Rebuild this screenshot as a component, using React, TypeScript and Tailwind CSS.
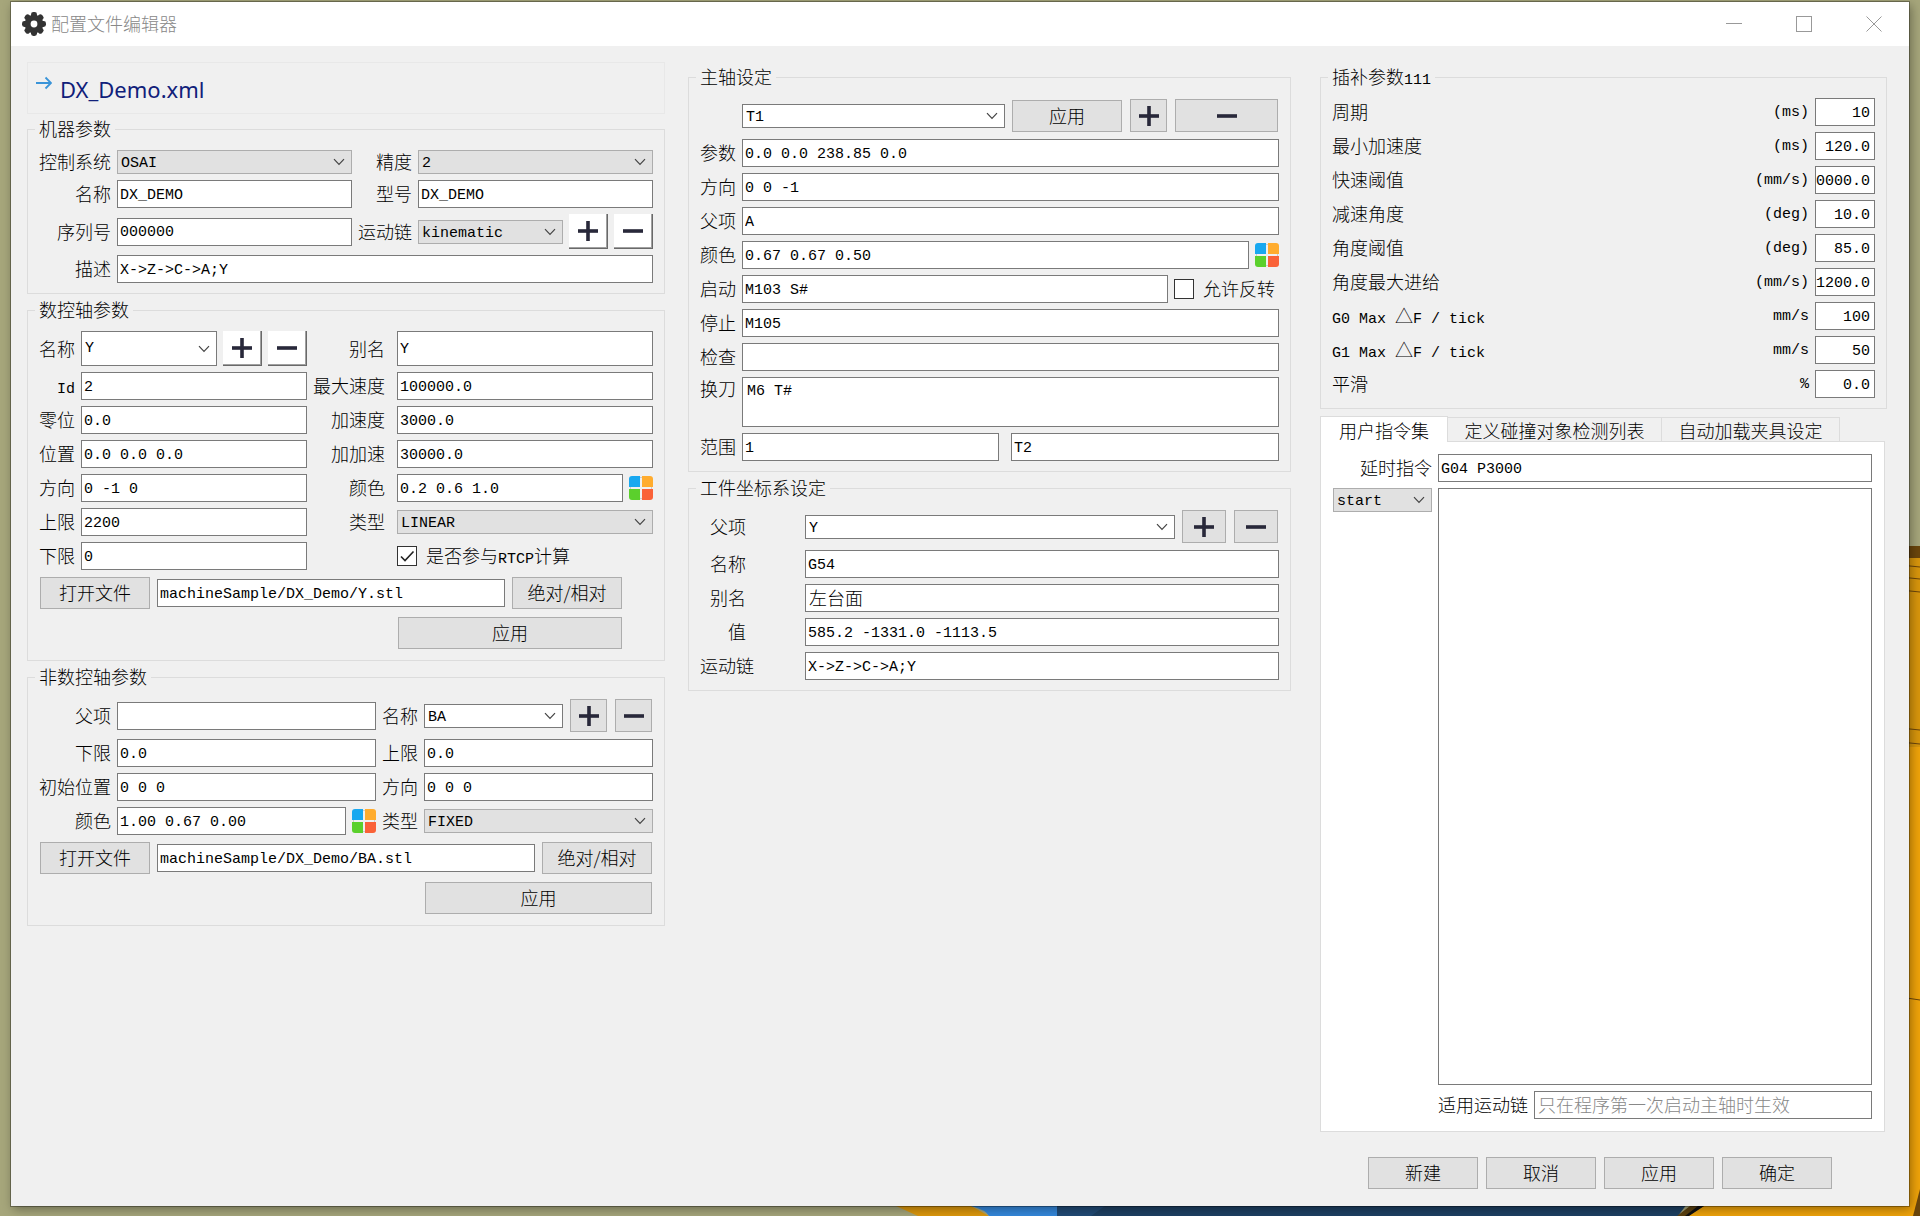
import React, { useState } from 'react';

const INPUT = "block h-7 w-full min-w-0 border border-[#7a7a7a] bg-white pt-[2px] pl-[2px] font-['Liberation_Mono','Noto_Sans_CJK_SC',monospace] text-[15px] font-normal text-black outline-none";
const INPUT_CJK = 'block h-7 w-full min-w-0 border border-[#7a7a7a] bg-white pb-[2px] pl-[3px] text-lg outline-none placeholder:text-[#888]';

interface FieldProps {
  id: string;
  label: string;
  value?: string;
  className?: string;
}

const Label: React.FC<{ id: string; className?: string; children: React.ReactNode }> = ({ id, className = '', children }) => (
  <label htmlFor={id} className={`h-6 whitespace-nowrap text-right leading-[22px] ${className}`}>{children}</label>
);

const Mono: React.FC<{ children: React.ReactNode }> = ({ children }) => (
  <span className="font-['Liberation_Mono',monospace] text-[15px] font-normal leading-none">{children}</span>
);

const TextInput: React.FC<{ id: string; value?: string; className?: string; label?: string }> = ({ id, value = '', className = '', label }) => (
  <input id={id} type="text" defaultValue={value} aria-label={label} className={`${INPUT} ${className}`} />
);

const Field: React.FC<FieldProps> = ({ id, label, value, className }) => (
  <>
    <Label id={id} className={className}>{label}</Label>
    <TextInput id={id} value={value} />
  </>
);

interface ComboProps {
  id: string;
  value: string;
  editable?: boolean;
  className?: string;
  height?: string;
  label?: string;
}

const Combo: React.FC<ComboProps> = ({ id, value, editable = false, className = '', height = 'h-6', label }) => (
  <div className={`relative min-w-0 ${className}`}>
    <select
      id={id}
      aria-label={label}
      className={`block w-full appearance-none border pt-px pl-[3px] pr-6 font-['Liberation_Mono',monospace] text-[15px] font-normal text-black outline-none ${height} ${
        editable ? 'border-[#7a7a7a] bg-white' : 'border-[#adadad] bg-[#e1e1e1]'
      }`}
    >
      <option>{value}</option>
    </select>
    <svg className="absolute right-[7px] top-1/2 h-3 w-3 -translate-y-1/2 pointer-events-none" viewBox="0 0 12 12" fill="none" stroke="#444" strokeWidth="1.2">
      <path d="M1 3.2 6 8.4 11 3.2" />
    </svg>
  </div>
);

const PushButton: React.FC<{ className?: string; children: React.ReactNode }> = ({ className = 'w-[110px]', children }) => (
  <button type="button" className={`m-px h-8 shrink-0 border border-[#adadad] bg-[#e1e1e1] pb-[2px] text-center leading-[28px] ${className}`}>
    {children}
  </button>
);

const SignIcon: React.FC<{ sign: 'plus' | 'minus' }> = ({ sign }) => (
  <svg className="w-5 h-5 mx-auto" viewBox="0 0 20 20" fill="#28283a">
    <rect x="0" y="8.200" width="20" height="3.6" />
    {sign === 'plus' && <rect x="8.200" y="0" width="3.6" height="20" />}
  </svg>
);

const SignButton: React.FC<{ sign: 'plus' | 'minus'; raised?: boolean; className?: string }> = ({ sign, raised = false, className = 'w-[37px]' }) => (
  <button
    type="button"
    aria-label={sign === 'plus' ? '添加' : '删除'}
    className={`shrink-0 ${
      raised
        ? 'h-[35px] w-[39px] bg-white border-b border-r border-[#696969] shadow-[inset_-1px_-1px_0_#a0a0a0]'
        : `m-px h-[33px] border border-[#adadad] bg-[#e1e1e1] ${className}`
    }`}
  >
    <SignIcon sign={sign} />
  </button>
);

const ColorButton: React.FC = () => (
  <button type="button" aria-label="选择颜色" className="w-6 h-6 shrink-0">
    <svg className="w-6 h-6" viewBox="0 0 24 24">
      <rect x="1.5" y="1.5" width="21" height="21" fill="none" stroke="#ccc" />
      <path d="M3 0h8v11H0V3a3 3 0 0 1 3-3z" fill="#18a8f0" />
      <path d="M13 0h8a3 3 0 0 1 3 3v8H13z" fill="#ffac2e" />
      <path d="M0 13h11v11H3a3 3 0 0 1-3-3z" fill="#5bd02c" />
      <path d="M13 13h11v8a3 3 0 0 1-3 3h-8z" fill="#fa6238" />
    </svg>
  </button>
);

const CheckBox: React.FC<{ id: string; checked: boolean; onChange: (v: boolean) => void }> = ({ id, checked, onChange }) => (
  <span className="relative w-5 h-5 shrink-0">
    <input
      id={id}
      type="checkbox"
      checked={checked}
      onChange={(e) => onChange(e.target.checked)}
      className="block w-5 h-5 bg-white border border-[#333] appearance-none"
    />
    {checked && (
      <svg className="absolute inset-0 w-5 h-5 pointer-events-none" viewBox="0 0 20 20" fill="none" stroke="#222" strokeWidth="1.6">
        <path d="M4 10.5 8 14.5 16.5 5.5" />
      </svg>
    )}
  </span>
);

const GroupBox: React.FC<{ title: React.ReactNode; children: React.ReactNode }> = ({ title, children }) => (
  <fieldset className="min-w-0 border border-[#dcdcdc] px-[11px] pb-[10px]">
    <legend className="-ml-1 h-6 px-1 leading-[22px]">{title}</legend>
    {children}
  </fieldset>
);

const MachineGroup: React.FC = () => (
  <GroupBox title="机器参数">
    <div className="grid grid-cols-[72px_minmax(0,1fr)_54px_minmax(0,1fr)] items-center gap-[6px] pt-[9px]">
      <Label id="control">控制系统</Label>
      <Combo id="control" value="OSAI" />
      <Label id="precision">精度</Label>
      <Combo id="precision" value="2" />
      <Field id="machine-name" label="名称" value="DX_DEMO" />
      <Field id="machine-model" label="型号" value="DX_DEMO" />
      <Field id="serial" label="序列号" value="000000" />
      <Label id="chain">运动链</Label>
      <div className="flex items-center gap-[6px]">
        <Combo id="chain" value="kinematic" className="flex-1" />
        <SignButton sign="plus" raised />
        <SignButton sign="minus" raised />
      </div>
      <Label id="machine-desc">描述</Label>
      <TextInput id="machine-desc" value="X->Z->C->A;Y" className="col-span-3" />
    </div>
  </GroupBox>
);

const AxisGroup: React.FC = () => {
  const [rtcp, setRtcp] = useState(true);

  return (
    <GroupBox title="数控轴参数">
      <div className="grid grid-cols-[36px_minmax(0,226fr)_78px_minmax(0,256fr)] items-center gap-[6px] pt-[9px]">
        <Label id="axis-name">名称</Label>
        <div className="flex gap-[6px]">
          <Combo id="axis-name" value="Y" editable height="h-[35px]" className="flex-1" />
          <SignButton sign="plus" raised />
          <SignButton sign="minus" raised />
        </div>
        <Label id="axis-alias" className="pr-[6px]">别名</Label>
        <input id="axis-alias" type="text" defaultValue="Y" className={INPUT.replace('h-7', 'h-[35px]')} />
        <Label id="axis-id"><Mono>Id</Mono></Label>
        <TextInput id="axis-id" value="2" />
        <Field id="axis-speed" label="最大速度" value="100000.0" className="pr-[6px]" />
        <Field id="axis-zero" label="零位" value="0.0" />
        <Field id="axis-acc" label="加速度" value="3000.0" className="pr-[6px]" />
        <Field id="axis-pos" label="位置" value="0.0 0.0 0.0" />
        <Field id="axis-jerk" label="加加速" value="30000.0" className="pr-[6px]" />
        <Field id="axis-dir" label="方向" value="0 -1 0" />
        <Label id="axis-color" className="pr-[6px]">颜色</Label>
        <div className="flex items-center gap-[6px]">
          <TextInput id="axis-color" value="0.2 0.6 1.0" />
          <ColorButton />
        </div>
        <Field id="axis-upper" label="上限" value="2200" />
        <Label id="axis-type" className="pr-[6px]">类型</Label>
        <Combo id="axis-type" value="LINEAR" />
        <Field id="axis-lower" label="下限" value="0" />
        <div className="col-start-4 flex items-center gap-[9px]">
          <CheckBox id="rtcp" checked={rtcp} onChange={setRtcp} />
          <Label id="rtcp">是否参与<Mono>RTCP</Mono>计算</Label>
        </div>
      </div>
      <div className="flex items-center gap-[6px] pt-[6px] pr-[30px]">
        <PushButton>打开文件</PushButton>
        <TextInput id="axis-file" label="模型文件" value="machineSample/DX_Demo/Y.stl" />
        <PushButton>绝对/相对</PushButton>
      </div>
      <div className="grid grid-cols-[36px_minmax(0,226fr)_78px_minmax(0,256fr)] gap-[6px] pt-[6px]">
        <div className="flex col-start-4 pr-[30px]">
          <PushButton className="flex-1">应用</PushButton>
        </div>
      </div>
    </GroupBox>
  );
};

const StaticAxisGroup: React.FC = () => (
  <GroupBox title="非数控轴参数">
    <div className="grid grid-cols-[72px_minmax(0,259fr)_36px_minmax(0,229fr)] items-center gap-[6px] pt-[9px]">
      <Field id="static-parent" label="父项" />
      <Label id="static-name">名称</Label>
      <div className="flex items-center gap-[6px]">
        <Combo id="static-name" value="BA" editable className="flex-1" />
        <SignButton sign="plus" />
        <SignButton sign="minus" />
      </div>
      <Field id="static-lower" label="下限" value="0.0" />
      <Field id="static-upper" label="上限" value="0.0" />
      <Field id="static-init" label="初始位置" value="0 0 0" />
      <Field id="static-dir" label="方向" value="0 0 0" />
      <Label id="static-color">颜色</Label>
      <div className="flex items-center gap-[6px]">
        <TextInput id="static-color" value="1.00 0.67 0.00" />
        <ColorButton />
      </div>
      <Label id="static-type">类型</Label>
      <Combo id="static-type" value="FIXED" />
    </div>
    <div className="flex items-center gap-[6px] pt-[6px]">
      <PushButton>打开文件</PushButton>
      <TextInput id="static-file" label="模型文件" value="machineSample/DX_Demo/BA.stl" />
      <PushButton>绝对/相对</PushButton>
    </div>
    <div className="grid grid-cols-[72px_minmax(0,259fr)_36px_minmax(0,229fr)] gap-[6px] pt-[6px]">
      <div className="flex col-start-4">
        <PushButton className="flex-1">应用</PushButton>
      </div>
    </div>
  </GroupBox>
);

const SpindleGroup: React.FC = () => {
  const [reverse, setReverse] = useState(false);

  return (
    <GroupBox title="主轴设定">
      <div className="grid grid-cols-[36px_minmax(0,1fr)] items-center gap-[6px] pt-[9px]">
        <div className="col-start-2 flex items-center gap-[6px]">
          <Combo id="spindle" label="主轴" value="T1" editable className="flex-1" />
          <PushButton>应用</PushButton>
          <SignButton sign="plus" />
          <SignButton sign="minus" className="w-[103px]" />
        </div>
        <Field id="spindle-param" label="参数" value="0.0 0.0 238.85 0.0" />
        <Field id="spindle-dir" label="方向" value="0 0 -1" />
        <Field id="spindle-parent" label="父项" value="A" />
        <Label id="spindle-color">颜色</Label>
        <div className="flex items-center gap-[6px]">
          <TextInput id="spindle-color" value="0.67 0.67 0.50" />
          <ColorButton />
        </div>
        <Label id="spindle-start">启动</Label>
        <div className="flex items-center gap-[6px]">
          <TextInput id="spindle-start" value="M103 S#" />
          <div className="flex w-[105px] shrink-0 items-center gap-[9px]">
            <CheckBox id="reverse" checked={reverse} onChange={setReverse} />
            <Label id="reverse">允许反转</Label>
          </div>
        </div>
        <Field id="spindle-stop" label="停止" value="M105" />
        <Field id="spindle-check" label="检查" />
        <Label id="spindle-change" className="self-start">换刀</Label>
        <textarea
          id="spindle-change"
          defaultValue="M6 T#"
          className="block h-[50px] w-full resize-none border border-[#7a7a7a] bg-white px-1 pt-1 font-['Liberation_Mono',monospace] text-[15px] font-normal leading-5 text-black outline-none"
        />
        <Label id="spindle-range">范围</Label>
        <div className="flex gap-3">
          <div className="min-w-0 flex-[257]">
            <TextInput id="spindle-range" value="1" />
          </div>
          <div className="min-w-0 flex-[268]">
            <TextInput id="spindle-range-end" label="范围终点" value="T2" />
          </div>
        </div>
      </div>
    </GroupBox>
  );
};

const WorkpieceGroup: React.FC = () => (
  <GroupBox title="工件坐标系设定">
    <div className="grid grid-cols-[54px_minmax(0,1fr)] items-center gap-x-[51px] gap-y-[6px] pt-[9px]">
      <Label id="wcs-parent" className="pr-2">父项</Label>
      <div className="flex items-center gap-[6px]">
        <Combo id="wcs-parent" value="Y" editable className="flex-1" />
        <SignButton sign="plus" className="w-11" />
        <SignButton sign="minus" className="w-11" />
      </div>
      <Field id="wcs-name" label="名称" value="G54" className="pr-2" />
      <Label id="wcs-alias" className="pr-2">别名</Label>
      <input id="wcs-alias" type="text" defaultValue="左台面" className={INPUT_CJK} />
      <Field id="wcs-value" label="值" value="585.2 -1331.0 -1113.5" className="pr-2" />
      <Field id="wcs-chain" label="运动链" value="X->Z->C->A;Y" />
    </div>
  </GroupBox>
);

const InterpolationGroup: React.FC = () => {
  const params = [
    { id: 'period', label: '周期', unit: '(ms)', value: '10' },
    { id: 'min-acc', label: '最小加速度', unit: '(ms)', value: '120.0' },
    { id: 'rapid', label: '快速阈值', unit: '(mm/s)', value: '0000.0' },
    { id: 'dec-angle', label: '减速角度', unit: '(deg)', value: '10.0' },
    { id: 'angle', label: '角度阈值', unit: '(deg)', value: '85.0' },
    { id: 'angle-feed', label: '角度最大进给', unit: '(mm/s)', value: '1200.0' },
    { id: 'g0-max', label: <><Mono>G0 Max </Mono>△<Mono>F / tick</Mono></>, unit: 'mm/s', value: '100' },
    { id: 'g1-max', label: <><Mono>G1 Max </Mono>△<Mono>F / tick</Mono></>, unit: 'mm/s', value: '50' },
    { id: 'smooth', label: '平滑', unit: '%', value: '0.0' },
  ];

  return (
    <GroupBox title={<>插补参数<Mono>111</Mono></>}>
      <div className="flex flex-col gap-[6px] pt-[9px]">
        {params.map((p) => (
          <div key={p.id} className="flex items-center h-7 gap-[6px]">
            <label htmlFor={p.id} className="flex-1 h-6 whitespace-nowrap leading-[22px]">{p.label}</label>
            <Mono>{p.unit}</Mono>
            <input
              id={p.id}
              type="text"
              defaultValue={p.value}
              className="h-7 w-[60px] border border-[#7a7a7a] bg-white pt-[2px] pr-1 text-right font-['Liberation_Mono',monospace] text-[15px] font-normal text-black outline-none"
            />
          </div>
        ))}
      </div>
    </GroupBox>
  );
};

const CommandTabs: React.FC = () => (
  <div className="flex flex-col flex-1 mt-[7px] mr-[2px]">
    <div role="tablist" className="flex items-end">
      <button type="button" role="tab" aria-selected="true" className="relative z-10 -mb-px h-[26px] w-[128px] border border-b-0 border-[#dcdcdc] bg-white leading-[22px]">
        用户指令集
      </button>
      <button type="button" role="tab" aria-selected="false" className="h-6 w-[214px] border border-b-0 border-l-0 border-[#dcdcdc] leading-[22px]">
        定义碰撞对象检测列表
      </button>
      <button type="button" role="tab" aria-selected="false" className="h-6 w-[178px] border border-b-0 border-l-0 border-[#dcdcdc] leading-[22px]">
        自动加载夹具设定
      </button>
    </div>
    <div role="tabpanel" className="grid flex-1 grid-cols-[99px_minmax(0,1fr)] grid-rows-[28px_minmax(0,1fr)_28px] gap-[6px] border border-[#dcdcdc] bg-white px-3 py-3">
      <Label id="delay" className="self-center">延时指令</Label>
      <TextInput id="delay" value="G04 P3000" />
      <Combo id="stage" label="指令阶段" value="start" className="self-start" />
      <textarea
        aria-label="指令内容"
        className="block w-full h-full resize-none border border-[#7a7a7a] bg-white px-1 font-['Liberation_Mono',monospace] text-[15px] font-normal outline-none"
      />
      <div className="col-start-2 flex items-center gap-[6px]">
        <Label id="apply-chain">适用运动链</Label>
        <input id="apply-chain" type="text" placeholder="只在程序第一次启动主轴时生效" className={INPUT_CJK} />
      </div>
    </div>
  </div>
);

const GearIcon: React.FC = () => (
  <svg className="w-6 h-6" viewBox="0 0 24 24" fill="#333">
    {[0, 45, 90, 135].map((angle) => (
      <rect key={angle} x="9" y="0" width="6" height="24" rx="2.4" transform={`rotate(${angle} 12 12)`} />
    ))}
    <circle cx="12" cy="12" r="9.300" />
    <circle cx="12" cy="12" r="3.4" fill="#fff" />
  </svg>
);

const TitleBar: React.FC = () => (
  <header className="flex h-11 items-center bg-white pl-[11px] text-[#888]">
    <GearIcon />
    <h1 className="flex-1 pl-[5px] pb-[2px]">配置文件编辑器</h1>
    <button type="button" aria-label="最小化" className="h-full w-[70px]">
      <svg className="w-4 h-4 mx-auto" viewBox="0 0 16 16" stroke="#999" fill="none"><path d="M0 7.5h16" /></svg>
    </button>
    <button type="button" aria-label="最大化" className="h-full w-[70px]">
      <svg className="w-4 h-4 mx-auto" viewBox="0 0 16 16" stroke="#999" fill="none"><rect x=".5" y=".5" width="15" height="15" /></svg>
    </button>
    <button type="button" aria-label="关闭" className="h-full w-[70px]">
      <svg className="w-4 h-4 mx-auto" viewBox="0 0 16 16" stroke="#999" fill="none"><path d="M.5.5l15 15M15.5.5l-15 15" /></svg>
    </button>
  </header>
);

// desktop wallpaper, visible only around the window edges
const Wallpaper: React.FC = () => (
  <svg className="absolute inset-0 w-full h-full" viewBox="0 0 1920 1216" preserveAspectRatio="none">
    <rect width="1920" height="1216" fill="#a6a67b" />
    <path d="M1880 546h40v12h-40z" fill="#6b460c" />
    <path d="M1880 558h40v189h-40z" fill="#d8960c" />
    <path d="M1880 747h40v469h-240l10-10h190z" fill="#efa30a" />
    <path d="M1900 565l20 2M1900 577l20 2M1900 590l20 2M1900 728l20 2M1900 742l20 2M1900 997l20 3" stroke="#6b460c" fill="none" />
    <path d="M896 1206h75l18 10h-71z" fill="#dd980c" />
    <path d="M971 1206h87v10h-69q-3-6-18-10z" fill="#3488dc" />
    <path d="M1057 1200h633l-12 16h-621z" fill="#1d4063" />
    <path d="M1057 1206h48l-14 10h-34z" fill="#214b76" />
    <path d="M1690 1206h14l-16 10h-11z" fill="#5c410f" />
    <path d="M1698 1206h6l-15 10h-4z" fill="#111" />
    <path d="M1920 1189v27h-7z" fill="#6b460c" />
  </svg>
);

export default function App() {
  return (
    <div className="relative flex min-h-screen bg-[#a6a67b] pt-[2px] pr-[11px] pb-[10px] pl-[11px] font-['Noto_Sans_CJK_SC',sans-serif] text-lg font-light leading-6 text-black">
      <Wallpaper />
      <div className="relative flex min-w-0 flex-1 flex-col bg-[#f0f0f0] shadow-[0_0_0_1px_#00000050,2px_3px_10px_#00000060]">
        <TitleBar />
        <main className="grid flex-1 grid-cols-[638fr_603fr_573fr] gap-[23px] pr-[22px] pb-4 pl-4">
          <div className="min-w-0 pt-4">
            <div className="mb-[3px] flex h-[52px] border border-[#e8e8e8] pl-2">
              <svg className="w-4 h-4 mt-3" viewBox="0 0 16 16" fill="none" stroke="#3a94d8" strokeWidth="1.8">
                <path d="M0 8h15M9.5 2.5 15 8l-5.500 5.500" />
              </svg>
              <span className="pl-2 font-['Noto_Sans',sans-serif] text-[22px] font-normal leading-[52px] text-[#10207a]">DX_Demo.xml</span>
            </div>
            <div className="flex flex-col gap-1">
              <MachineGroup />
              <AxisGroup />
              <StaticAxisGroup />
            </div>
          </div>
          <div className="flex min-w-0 flex-col gap-1 pt-[19px]">
            <SpindleGroup />
            <WorkpieceGroup />
          </div>
          <div className="flex min-w-0 flex-col pt-[19px] pl-[6px]">
            <InterpolationGroup />
            <CommandTabs />
            <div className="flex justify-end gap-[6px] pt-6 pr-[54px]">
              <PushButton>新建</PushButton>
              <PushButton>取消</PushButton>
              <PushButton>应用</PushButton>
              <PushButton>确定</PushButton>
            </div>
          </div>
        </main>
      </div>
    </div>
  );
}
